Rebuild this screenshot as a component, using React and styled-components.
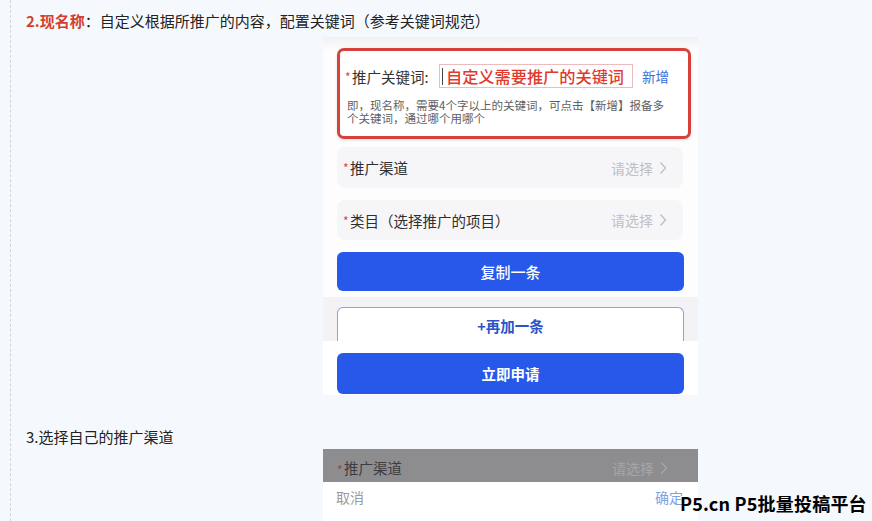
import styled, { createGlobalStyle } from "styled-components";

const GlobalStyle = createGlobalStyle`
  html, body {
    margin: 0;
    padding: 0;
    background: #f5f9fd;
    font-family: "Noto Sans CJK SC", "Noto Sans", sans-serif;
    color: #222;
  }
`;

const Page = styled.div`
  position: relative;
  height: 521px;
  overflow: hidden;
  padding-left: 10px;
  box-sizing: border-box;
`;

const Content = styled.div`
  height: 100%;
  border-left: 1px dashed #cdd5de;
  padding-left: 15px;
  padding-top: 11px;
  box-sizing: border-box;
`;

const Para = styled.p`
  margin: ${(p) => p.$mt || 0}px 0 0;
  font-size: 15px;
  line-height: 20px;
  color: #222;
`;

const Strong = styled.b`
  color: #d4402f;
  font-weight: 700;
`;

const Shot = styled.div`
  width: 375px;
  margin: ${(p) => p.$mt}px 0 0 297px;
  background: #fdfdfe;
  overflow: hidden;
`;

const Upper = styled.div`
  padding: 11px 7px 6px 14px;
  background: linear-gradient(#f1f1f4 0, #fdfdfe 14px);
`;

const RedBox = styled.div`
  height: 91px;
  box-sizing: border-box;
  border: 3px solid #d8403a;
  border-radius: 7px;
  background: #fff;
  padding: 13px 0 0 3px;
  box-shadow: 0 1px 3px rgba(0, 0, 0, 0.12);
`;

const KeyRow = styled.div`
  display: flex;
  align-items: center;
  height: 24px;
`;

const Star = styled.span`
  font-size: 12px;
  width: 7px;
  margin-left: ${(p) => p.$ml || 0}px;
  color: ${(p) => (p.$dim ? "#8a4a48" : "#e0453c")};
`;

const KeyLabel = styled.span`
  font-size: 14.5px;
  color: #333;
  width: 87px;
`;

const Input = styled.div`
  width: 194px;
  height: 24px;
  box-sizing: border-box;
  border: 1px solid #ecbcbc;
  display: flex;
  align-items: center;
  padding-left: 2px;
  gap: 3px;
`;

const Cursor = styled.span`
  width: 0;
  height: 17px;
  border-left: 1.5px solid #444;
`;

const InputText = styled.span`
  font-size: 16.2px;
  font-weight: 500;
  color: #e03a2e;
  line-height: 1;
  white-space: nowrap;
`;

const AddLink = styled.span`
  margin-left: 9px;
  font-size: 13.5px;
  color: #3a6fd6;
`;

const Hint = styled.div`
  width: 326px;
  margin: 11px 0 0 4px;
  font-size: 11.5px;
  line-height: 12.5px;
  color: #5f5f62;
`;

const Card = styled.div`
  margin: ${(p) => p.$mt}px 8px 0 0;
  height: ${(p) => p.$h}px;
  border-radius: 8px;
  background: #f6f6f8;
  display: flex;
  align-items: center;
  padding: 0 16px 0 6px;
`;

const CardLabel = styled.span`
  flex: 1;
  font-size: 14.5px;
  color: #2f2f32;
`;

const Pick = styled.span`
  display: flex;
  align-items: center;
  gap: 6px;
  font-size: 14px;
  color: #bfbfc4;
`;

const Primary = styled.div`
  margin: ${(p) => p.$mt || 0}px ${(p) => p.$mr || 0}px 0 0;
  height: ${(p) => p.$h}px;
  border-radius: 6px;
  background: #2758e9;
  color: #fff;
  font-size: ${(p) => p.$fs || 15}px;
  font-weight: ${(p) => p.$fw || 500};
  display: flex;
  align-items: center;
  justify-content: center;
`;

const Strip = styled.div`
  height: 44px;
  background: #f3f3f5;
  padding: 10px 14px 0 14px;
  box-sizing: border-box;
`;

const Outline = styled.div`
  width: 347px;
  height: 34px;
  box-sizing: border-box;
  border: 1.5px solid #8ea4d2;
  border-bottom: none;
  border-radius: 6px 6px 0 0;
  background: #fff;
  color: #2b55c7;
  font-size: 14.5px;
  font-weight: 700;
  display: flex;
  align-items: center;
  justify-content: center;
  padding-top: 2px;
`;

const Bottom = styled.div`
  background: #fff;
  padding: 12px 14px 1px 14px;
`;

const Shot2 = styled.div`
  width: 375px;
  min-height: 100px;
  margin: 2px 0 0 297px;
  background: #fff;
`;

const DimRow = styled.div`
  height: 29px;
  background: #8d8d8f;
  display: flex;
  align-items: flex-end;
  padding: 0 30px 4px 14px;
`;

const DimLabel = styled.span`
  flex: 1;
  font-size: 14.5px;
  color: #3d3d3f;
`;

const DimPick = styled(Pick)`
  color: #a5a5a8;
`;

const SheetBar = styled.div`
  display: flex;
  justify-content: space-between;
  padding: 5px 15px 0 13px;
  font-size: 14px;
`;

const Cancel = styled.span`
  color: #9a9a9c;
`;

const Confirm = styled.span`
  color: #7ea3dd;
`;

const Watermark = styled.div`
  position: absolute;
  left: 680px;
  top: 490px;
  font-size: 18px;
  font-weight: 700;
  color: #000;
  white-space: nowrap;
  letter-spacing: 0.2px;
`;

function Chevron({ color = "#c0c0c4" }) {
  return (
    <svg width="8" height="14" viewBox="0 0 8 14">
      <polyline points="1.5,1.5 6.5,7 1.5,12.5" fill="none" stroke={color} strokeWidth="1.4" />
    </svg>
  );
}

export default function App() {
  return (
    <>
      <GlobalStyle />
      <Page>
        <Content>
          <Para>
            <Strong>2.现名称</Strong>：自定义根据所推广的内容，配置关键词（参考关键词规范）
          </Para>

          <Shot $mt={6}>
            <Upper>
              <RedBox>
                <KeyRow>
                  <Star $ml={2}>*</Star>
                  <KeyLabel>推广关键词:</KeyLabel>
                  <Input>
                    <Cursor />
                    <InputText>自定义需要推广的关键词</InputText>
                  </Input>
                  <AddLink>新增</AddLink>
                </KeyRow>
                <Hint>即，现名称，需要4个字以上的关键词，可点击【新增】报备多个关键词，通过哪个用哪个</Hint>
              </RedBox>
              <Card $mt={8} $h={41}>
                <Star>*</Star>
                <CardLabel>推广渠道</CardLabel>
                <Pick>请选择<Chevron /></Pick>
              </Card>
              <Card $mt={12} $h={40}>
                <Star>*</Star>
                <CardLabel>类目（选择推广的项目）</CardLabel>
                <Pick>请选择<Chevron /></Pick>
              </Card>
              <Primary $mt={12} $mr={7} $h={39}>复制一条</Primary>
            </Upper>
            <Strip>
              <Outline>+再加一条</Outline>
            </Strip>
            <Bottom>
              <Primary $h={41} $fs={14.5} $fw={700}>立即申请</Primary>
            </Bottom>
          </Shot>

          <Para $mt={32}>3.选择自己的推广渠道</Para>

          <Shot2>
            <DimRow>
              <Star $dim>*</Star>
              <DimLabel>推广渠道</DimLabel>
              <DimPick>请选择<Chevron color="#a5a5a8" /></DimPick>
            </DimRow>
            <SheetBar>
              <Cancel>取消</Cancel>
              <Confirm>确定</Confirm>
            </SheetBar>
          </Shot2>
        </Content>
        <Watermark>P5.cn P5批量投稿平台</Watermark>
      </Page>
    </>
  );
}
